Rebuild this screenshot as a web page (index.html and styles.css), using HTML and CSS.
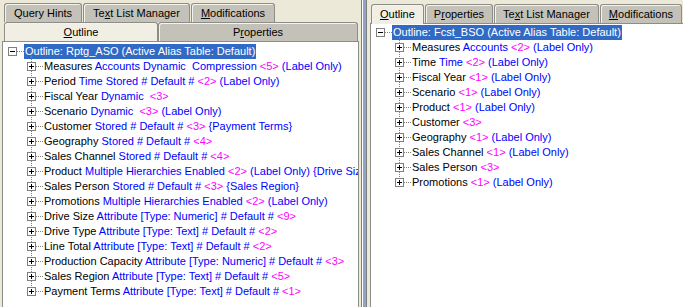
FILE: index.html
```html
<!DOCTYPE html>
<html lang="en">
<head>
  <meta charset="UTF-8" />
  <title>Outline Viewer</title>
  <link rel="stylesheet" href="styles.css">
</head>
<body>

<div class="pane pane-left">
  <div class="tab-row row-back">
    <div class="tab">Query Hints</div>
    <div class="tab">Te<u>x</u>t List Manager</div>
    <div class="tab"><u>M</u>odifications</div>
  </div>
  <div class="tab-row row-front">
    <div class="tab active tab-outline"><u>O</u>utline</div>
    <div class="tab tab-props">P<u>r</u>operties</div>
  </div>
  <div class="tree">
    <div class="node root">
      <div class="row"><span class="toggle minus"></span><span class="stub"></span><span class="label selected">Outline: Rptg_ASO (Active Alias Table: Default)</span></div>
      <ul class="children">
        <li class="row"><span class="toggle"></span><span class="stub"></span><span class="label">Measures <span class="a">Accounts Dynamic&nbsp; Compression</span> <span class="m">&lt;5&gt;</span> <span class="a">(Label Only)</span></span></li>
        <li class="row"><span class="toggle"></span><span class="stub"></span><span class="label">Period <span class="a">Time Stored # Default #</span> <span class="m">&lt;2&gt;</span> <span class="a">(Label Only)</span></span></li>
        <li class="row"><span class="toggle"></span><span class="stub"></span><span class="label">Fiscal Year <span class="a">Dynamic</span>&nbsp; <span class="m">&lt;3&gt;</span></span></li>
        <li class="row"><span class="toggle"></span><span class="stub"></span><span class="label">Scenario <span class="a">Dynamic</span>&nbsp; <span class="m">&lt;3&gt;</span> <span class="a">(Label Only)</span></span></li>
        <li class="row"><span class="toggle"></span><span class="stub"></span><span class="label">Customer <span class="a">Stored # Default #</span> <span class="m">&lt;3&gt;</span> <span class="a">{Payment Terms}</span></span></li>
        <li class="row"><span class="toggle"></span><span class="stub"></span><span class="label">Geography <span class="a">Stored # Default #</span> <span class="m">&lt;4&gt;</span></span></li>
        <li class="row"><span class="toggle"></span><span class="stub"></span><span class="label">Sales Channel <span class="a">Stored # Default #</span> <span class="m">&lt;4&gt;</span></span></li>
        <li class="row"><span class="toggle"></span><span class="stub"></span><span class="label">Product <span class="a">Multiple Hierarchies Enabled</span> <span class="m">&lt;2&gt;</span> <span class="a">(Label Only) {Drive Size,</span></span></li>
        <li class="row"><span class="toggle"></span><span class="stub"></span><span class="label">Sales Person <span class="a">Stored # Default #</span> <span class="m">&lt;3&gt;</span> <span class="a">{Sales Region}</span></span></li>
        <li class="row"><span class="toggle"></span><span class="stub"></span><span class="label">Promotions <span class="a">Multiple Hierarchies Enabled</span> <span class="m">&lt;2&gt;</span> <span class="a">(Label Only)</span></span></li>
        <li class="row"><span class="toggle"></span><span class="stub"></span><span class="label">Drive Size <span class="a">Attribute [Type: Numeric] # Default #</span> <span class="m">&lt;9&gt;</span></span></li>
        <li class="row"><span class="toggle"></span><span class="stub"></span><span class="label">Drive Type <span class="a">Attribute [Type: Text] # Default #</span> <span class="m">&lt;2&gt;</span></span></li>
        <li class="row"><span class="toggle"></span><span class="stub"></span><span class="label">Line Total <span class="a">Attribute [Type: Text] # Default #</span> <span class="m">&lt;2&gt;</span></span></li>
        <li class="row"><span class="toggle"></span><span class="stub"></span><span class="label">Production Capacity <span class="a">Attribute [Type: Numeric] # Default #</span> <span class="m">&lt;3&gt;</span></span></li>
        <li class="row"><span class="toggle"></span><span class="stub"></span><span class="label">Sales Region <span class="a">Attribute [Type: Text] # Default #</span> <span class="m">&lt;5&gt;</span></span></li>
        <li class="row"><span class="toggle"></span><span class="stub"></span><span class="label">Payment Terms <span class="a">Attribute [Type: Text] # Default #</span> <span class="m">&lt;1&gt;</span></span></li>
      </ul>
    </div>
  </div>
</div>

<div class="splitter"></div>

<div class="pane pane-right">
  <div class="tab-row row-single">
    <div class="tab active"><u>O</u>utline</div>
    <div class="tab">P<u>r</u>operties</div>
    <div class="tab">Te<u>x</u>t List Manager</div>
    <div class="tab"><u>M</u>odifications</div>
  </div>
  <div class="tree tree-right">
    <div class="node root">
      <div class="row"><span class="toggle minus"></span><span class="stub"></span><span class="label selected">Outline: Fcst_BSO (Active Alias Table: Default)</span></div>
      <ul class="children">
        <li class="row"><span class="toggle"></span><span class="stub"></span><span class="label">Measures <span class="a">Accounts</span> <span class="m">&lt;2&gt;</span> <span class="a">(Label Only)</span></span></li>
        <li class="row"><span class="toggle"></span><span class="stub"></span><span class="label">Time <span class="a">Time</span> <span class="m">&lt;2&gt;</span> <span class="a">(Label Only)</span></span></li>
        <li class="row"><span class="toggle"></span><span class="stub"></span><span class="label">Fiscal Year <span class="m">&lt;1&gt;</span> <span class="a">(Label Only)</span></span></li>
        <li class="row"><span class="toggle"></span><span class="stub"></span><span class="label">Scenario <span class="m">&lt;1&gt;</span> <span class="a">(Label Only)</span></span></li>
        <li class="row"><span class="toggle"></span><span class="stub"></span><span class="label">Product <span class="m">&lt;1&gt;</span> <span class="a">(Label Only)</span></span></li>
        <li class="row"><span class="toggle"></span><span class="stub"></span><span class="label">Customer <span class="m">&lt;3&gt;</span></span></li>
        <li class="row"><span class="toggle"></span><span class="stub"></span><span class="label">Geography <span class="m">&lt;1&gt;</span> <span class="a">(Label Only)</span></span></li>
        <li class="row"><span class="toggle"></span><span class="stub"></span><span class="label">Sales Channel <span class="m">&lt;1&gt;</span> <span class="a">(Label Only)</span></span></li>
        <li class="row"><span class="toggle"></span><span class="stub"></span><span class="label">Sales Person <span class="m">&lt;3&gt;</span></span></li>
        <li class="row"><span class="toggle"></span><span class="stub"></span><span class="label">Promotions <span class="m">&lt;1&gt;</span> <span class="a">(Label Only)</span></span></li>
      </ul>
    </div>
  </div>
</div>

</body>
</html>
```

FILE: styles.css
```css
:root {
  --face: #ece9d8;
  --tab-off: #c4c2b8;
  --edge: #8c8c88;
  --line: #808080;
  --select: #316ac5;
  --blue: #0000ff;
  --pink: #ff00ff;
}

* {
  box-sizing: border-box;
  margin: 0;
  padding: 0;
}

body {
  font-family: 'Liberation Sans', Arial, sans-serif;
  font-size: 11px;
  color: #000;
  background: var(--face);
  display: flex;
  height: 307px;
  overflow: hidden;
}

.pane {
  display: flex;
  flex-direction: column;
  height: 100%;
}

.pane-left {
  width: 362px;
  border-right: 1px solid var(--line);
}

.pane-right {
  flex: 1;
  padding-left: 3px;
  min-width: 0;
}

/* splitter between the two panes */
.splitter {
  width: 5px;
  border-left: 1px solid #fff;
  border-right: 1px solid var(--line);
  background: #8fa5c6;
}

/* Tabs */
.tab-row {
  display: flex;
  gap: 1px;
  padding-left: 4px;
}

.row-back {
  padding-top: 3px;
  height: 22px;
}

.row-front {
  height: 19px;
  gap: 0;
}

.row-single {
  padding-top: 4px;
  padding-left: 1px;
  height: 23px;
  gap: 1px;
}

.tab {
  background: var(--tab-off);
  border: 1px solid var(--edge);
  border-bottom: none;
  border-radius: 3px 3px 0 0;
  box-shadow: inset 1px 1px 0 #f4f3ee;
  padding: 0 9px;
  line-height: 18px;
  white-space: nowrap;
  text-align: center;
}

.tab.active {
  background: #f1efe4;
  position: relative;
  z-index: 1;
}

.row-single .tab {
  padding: 0 8px;
}

.row-single .tab.active {
  height: 20px;
}

.tab-outline {
  width: 154px;
}

.tab-props {
  width: 200px;
}

/* Tree */
.tree {
  flex: 1;
  background: #fff;
  border: 1px solid var(--edge);
  border-bottom: none;
  margin: 0 2px;
  padding-top: 2px;
  overflow: hidden;
  white-space: nowrap;
}

.tree-right {
  margin: 0;
  border-right: none;
  padding-top: 1px;
}

.row {
  display: flex;
  align-items: center;
  height: 15px;
  list-style: none;
}

.toggle {
  flex: none;
  width: 9px;
  height: 9px;
  border: 1px solid #7f7f7f;
  background:
    linear-gradient(#000, #000) center / 5px 1px no-repeat,
    linear-gradient(#000, #000) center / 1px 5px no-repeat,
    #fff;
  position: relative;
  z-index: 1;
}

.toggle.minus {
  background:
    linear-gradient(#000, #000) center / 5px 1px no-repeat,
    #fff;
}

.stub {
  flex: none;
  width: 7px;
  border-top: 1px dotted var(--line);
}

.label {
  padding: 0 1px;
  line-height: 15px;
}

.label.selected {
  background: var(--select);
  color: #fff;
}

.root > .row .toggle {
  margin-left: 5px;
}

.children {
  position: relative;
}

.children::before {
  content: "";
  position: absolute;
  left: 28px;
  top: -3px;
  bottom: 7px;
  border-left: 1px dotted var(--line);
}

.children .toggle {
  margin-left: 24px;
}

.a {
  color: var(--blue);
}

.m {
  color: var(--pink);
}
```
